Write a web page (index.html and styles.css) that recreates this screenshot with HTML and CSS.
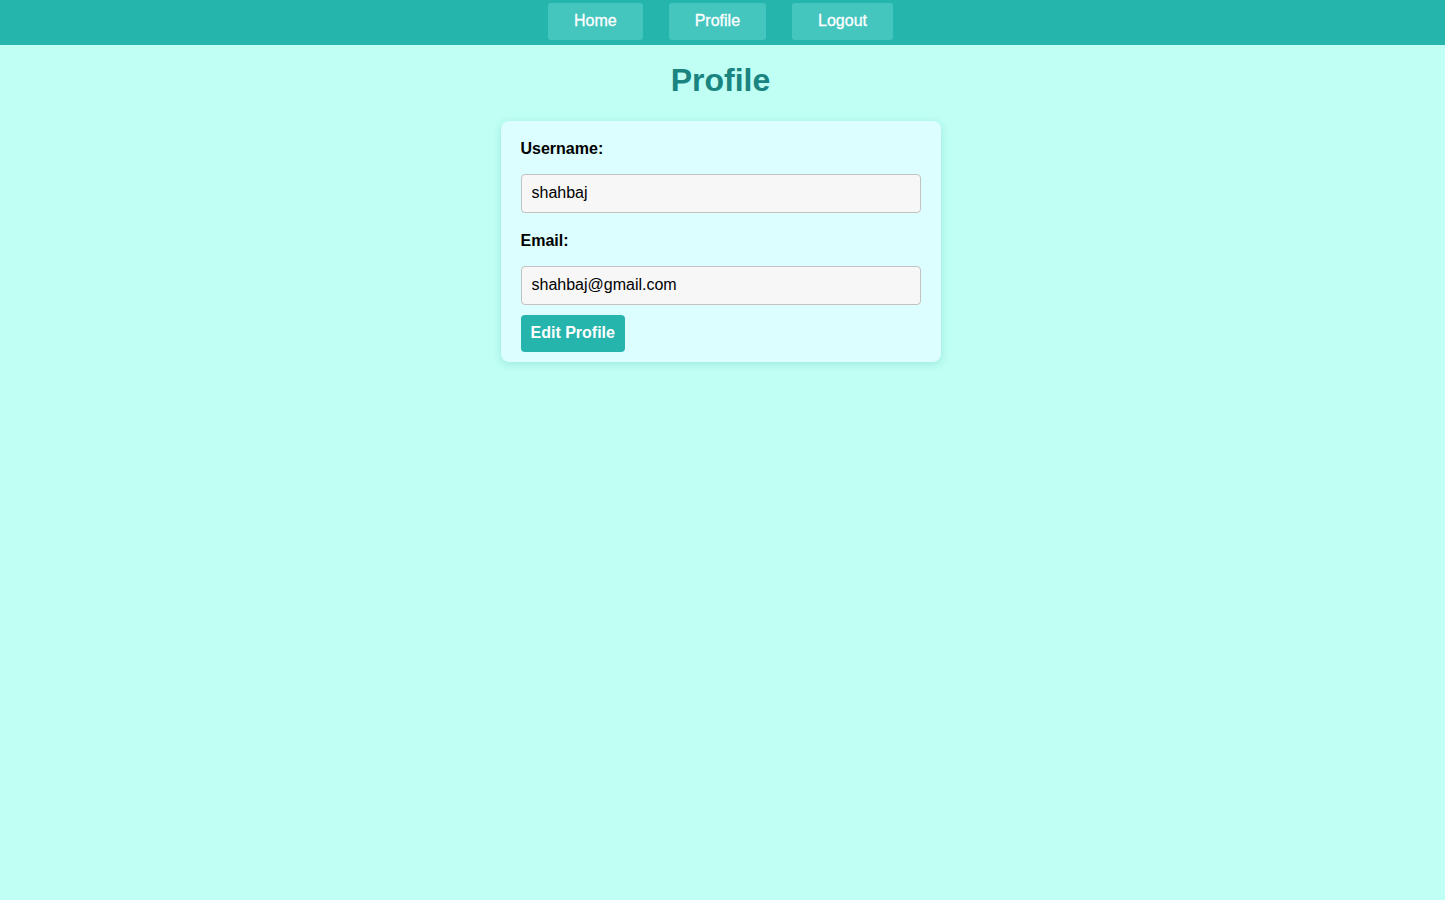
FILE: index.html
```html
<!DOCTYPE html>
<html>
<head>
<meta charset="utf-8">
<title>Profile</title>
<link rel="stylesheet" href="styles.css">
</head>
<body>
<nav class="navbar">
  <a class="nav-btn" href="#">Home</a>
  <a class="nav-btn" href="#">Profile</a>
  <a class="nav-btn" href="#">Logout</a>
</nav>
<main class="page">
  <h1 class="title">Profile</h1>
  <form class="card">
    <label class="label" for="username">Username:</label>
    <input class="field" id="username" type="text" value="shahbaj">
    <label class="label label-second" for="email">Email:</label>
    <input class="field" id="email" type="email" value="shahbaj@gmail.com">
    <button class="edit-btn" type="button">Edit Profile</button>
  </form>
</main>
</body>
</html>
```
FILE: styles.css
```css
* { box-sizing: border-box; }
html, body {
  margin: 0;
  padding: 0;
  height: 100%;
}
body {
  background: #bffff4;
  font-family: "Liberation Sans", Arial, Helvetica, sans-serif;
  font-size: 16px;
  color: #000;
}
.navbar {
  background: #26b5ad;
  height: 45px;
  display: flex;
  justify-content: center;
  align-items: flex-start;
  padding: 3px 4px 0 0;
  gap: 26px;
}
.nav-btn {
  display: flex;
  align-items: center;
  height: 37px;
  padding: 0 26px 2px;
  background: #44c6bf;
  color: #fff;
  text-decoration: none;
  border-radius: 3px;
  font-size: 16px;
  -webkit-text-stroke: 0.3px #fff;
}
.page {
  display: flex;
  flex-direction: column;
  align-items: center;
  padding-right: 4px;
}
.title {
  margin: 17px 0 22px;
  font-size: 32px;
  line-height: 37px;
  font-weight: bold;
  color: #1a8480;
}
.card {
  width: 440px;
  background: #dcfefe;
  border-radius: 8px;
  box-shadow: 0 2px 8px rgba(0, 120, 110, 0.18);
  padding: 19px 20px 10px;
  display: flex;
  flex-direction: column;
  align-items: flex-start;
}
.label {
  font-weight: bold;
  line-height: 18px;
  margin-bottom: 16px;
}
.label-second {
  margin-top: 19px;
  margin-bottom: 16px;
}
.field {
  width: 400px;
  height: 39px;
  background: #f7f7f7;
  border: 1px solid #c2c2c2;
  border-radius: 4px;
  padding: 0 10px 2px;
  font-family: "Liberation Sans", Arial, Helvetica, sans-serif;
  font-size: 16px;
  color: #000;
}
.edit-btn {
  margin-top: 10px;
  height: 37px;
  padding: 0 10px 2px;
  background: #26b5ad;
  color: #fff;
  border: none;
  border-radius: 4px;
  font-family: "Liberation Sans", Arial, Helvetica, sans-serif;
  font-size: 16px;
  font-weight: bold;
}
```
